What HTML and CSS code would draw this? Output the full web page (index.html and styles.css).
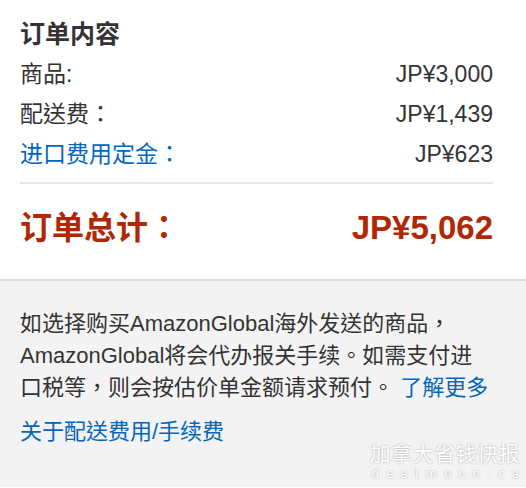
FILE: index.html
```html
<!DOCTYPE html>
<html lang="zh-TW">
<head>
    <meta charset="UTF-8">
    <meta name="viewport" content="width=device-width, initial-scale=1.0">
    <title>订单内容</title>
    <link rel="stylesheet" href="styles.css">
</head>
<body>

<section class="summary">
    <h2 class="summary-title">订单内容</h2>

    <div class="summary-row">
        <span>商品:</span>
        <span>JP¥3,000</span>
    </div>
    <div class="summary-row">
        <span>配送费：</span>
        <span>JP¥1,439</span>
    </div>
    <div class="summary-row">
        <a class="link" href="#">进口费用定金：</a>
        <span>JP¥623</span>
    </div>

    <div class="summary-total">
        <span>订单总计：</span>
        <span>JP¥5,062</span>
    </div>
</section>

<section class="notice">
    <p class="notice-text">如选择购买AmazonGlobal海外发送的商品，AmazonGlobal将会代办报关手续。如需支付进口税等，则会按估价单金额请求预付。 <a class="link" href="#">了解更多</a></p>
    <a class="link notice-link" href="#">关于配送费用/手续费</a>

    <!-- watermark -->
    <div class="watermark">
        <div class="watermark-name">加拿大省钱快报</div>
        <div class="watermark-site">dealmoon.ca</div>
    </div>
</section>

</body>
</html>
```

FILE: styles.css
```css
body {
    font-family: "Liberation Sans", "Noto Sans CJK TC", sans-serif;
    color: #333;
    background-color: white;
    margin: 0;
}

.link {
    color: #0066c0; /* Amazon link blue */
    text-decoration: none;
}

.summary {
    padding: 19px 33px 31px 20px;
}

.summary-title {
    font-size: 25px;
    line-height: 30px;
    font-weight: bold;
    margin: 0 0 5px;
}

.summary-row {
    display: flex;
    justify-content: space-between;
    font-size: 23px;
    line-height: 40px;
}

.summary-total {
    display: flex;
    justify-content: space-between;
    margin-top: 8px;
    border-top: 2px solid #e7e7e7;
    padding-top: 24px;
    font-size: 32px;
    line-height: 40px;
    font-weight: bold;
    color: #b12704; /* price red */
}

.summary-total span:last-child {
    font-size: 33px;
}

.notice {
    position: relative;
    min-height: 208px;
    box-sizing: border-box;
    background-color: #f3f3f3;
    border-top: 2px solid #dddddd;
    padding: 27px 35px 20px 20px;
    font-size: 22px;
    line-height: 32px;
    overflow: hidden;
}

.notice-text {
    margin: 0;
}

.notice-link {
    display: inline-block;
    margin-top: 12px;
}

.watermark {
    position: absolute;
    right: 0;
    bottom: 6px;
    color: white;
    text-shadow: 0 0 2px rgba(0, 0, 0, 0.35);
}

.watermark-name {
    font-size: 21px;
    line-height: 26px;
    letter-spacing: 0.5px;
}

.watermark-site {
    font-family: "DejaVu Sans", sans-serif;
    font-size: 12px;
    line-height: 14px;
    letter-spacing: 7px;
    padding-left: 2px;
}
```
